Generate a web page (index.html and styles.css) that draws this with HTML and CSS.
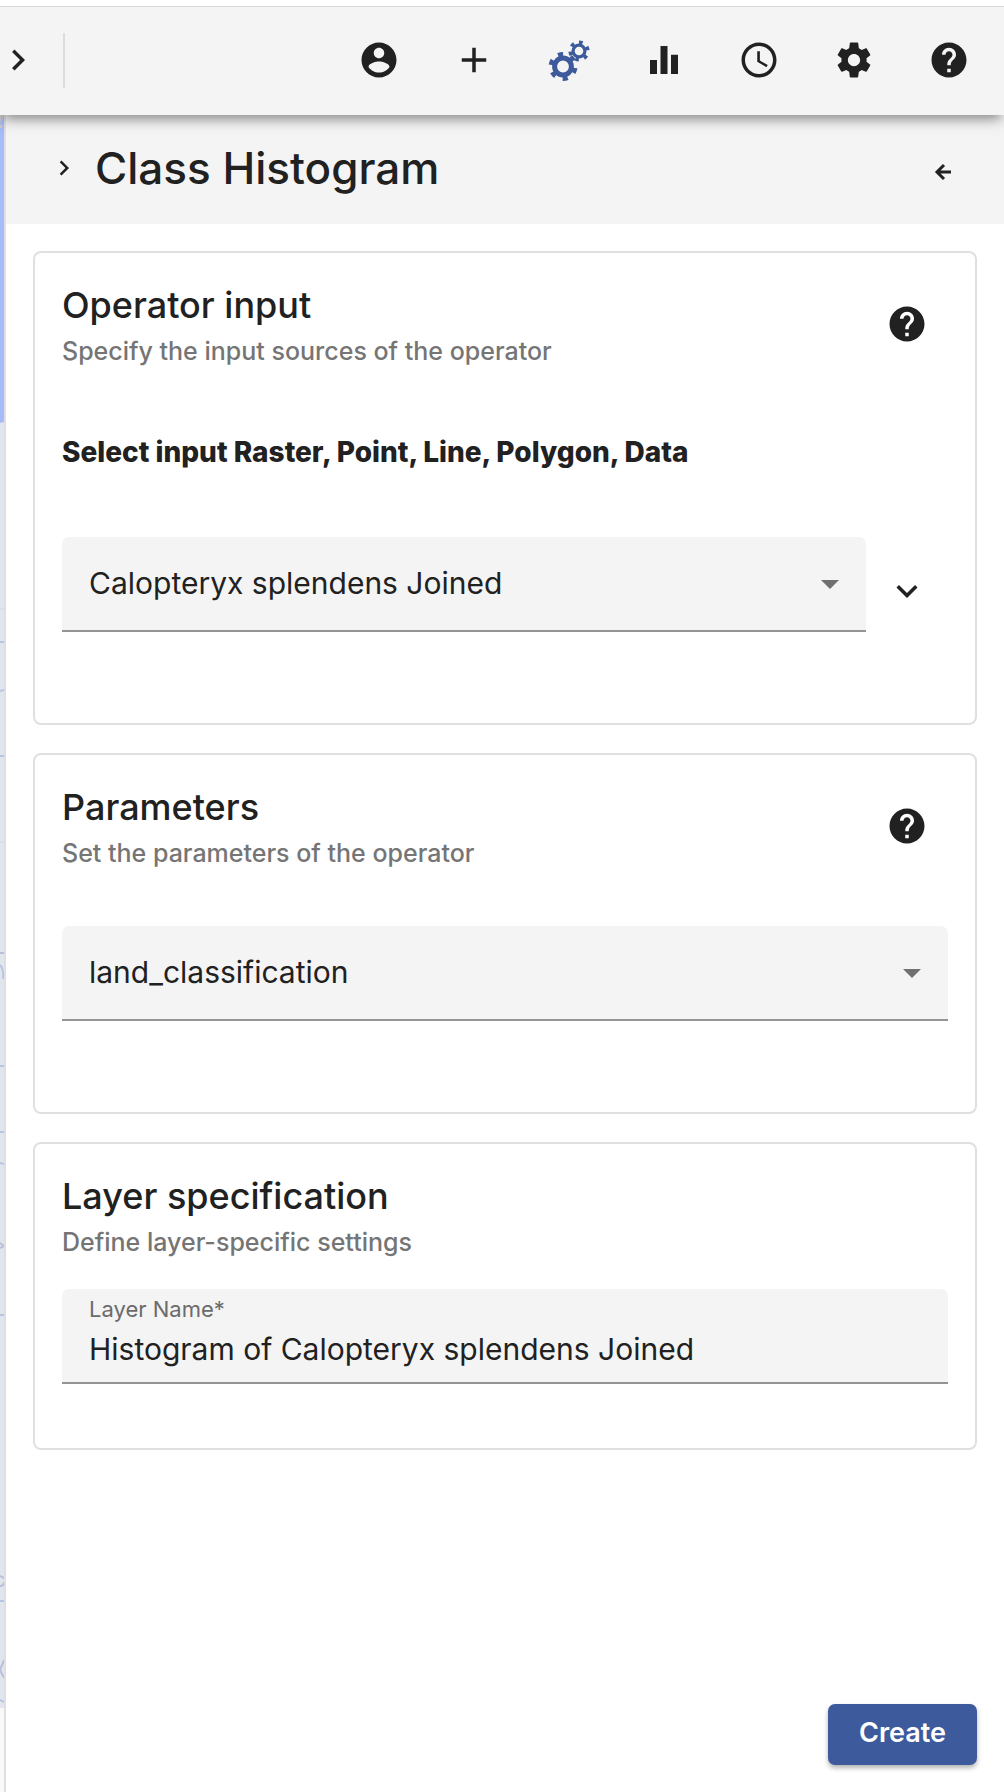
FILE: index.html
```html
<!DOCTYPE html>
<html lang="en">
<head>
<meta charset="utf-8">
<meta name="viewport" content="width=device-width, initial-scale=1">
<title>Class Histogram</title>
<link rel="stylesheet" href="styles.css">
</head>
<body>
<svg class="sprite" aria-hidden="true">
  <symbol id="i-help" viewBox="0 0 24 24"><path d="M12 2C6.480 2 2 6.480 2 12s4.480 10 10 10 10-4.480 10-10S17.520 2 12 2zm1 17h-2v-2h2v2zm2.070-7.750l-.9.920C13.450 12.900 13 13.500 13 15h-2v-.5c0-1.100.450-2.100 1.170-2.830l1.240-1.260c.370-.360.590-.860.590-1.410 0-1.100-.9-2-2-2s-2 .9-2 2H8c0-2.210 1.790-4 4-4s4 1.790 4 4c0 .880-.360 1.680-.930 2.250z"/></symbol>
  <symbol id="i-right" viewBox="0 0 24 24"><path d="M8.590 16.590L13.170 12 8.590 7.410 10 6l6 6-6 6z"/></symbol>
</svg>

<header class="toolbar">
  <button class="icon-btn collapse" type="button" aria-label="Expand"><svg class="icon"><use href="#i-right"/></svg></button>
  <span class="divider"></span>
  <nav class="tools">
    <button class="icon-btn" type="button" aria-label="Account"><svg class="icon" viewBox="0 0 24 24"><path d="M12 2C6.480 2 2 6.480 2 12s4.480 10 10 10 10-4.480 10-10S17.520 2 12 2zm0 3c1.660 0 3 1.340 3 3s-1.340 3-3 3-3-1.340-3-3 1.340-3 3-3zm0 14.200c-2.500 0-4.710-1.280-6-3.220.030-1.990 4-3.080 6-3.080 1.990 0 5.970 1.090 6 3.080-1.290 1.940-3.500 3.220-6 3.220z"/></svg></button>
    <button class="icon-btn" type="button" aria-label="Add data"><svg class="icon" viewBox="0 0 24 24"><path d="M19 13h-6v6h-2v-6H5v-2h6V5h2v6h6v2z"/></svg></button>
    <button class="icon-btn active" type="button" aria-label="Operators"><svg class="icon gears" viewBox="0 0 42 42">
      <circle cx="15" cy="27.500" r="8.400" stroke-width="5"/>
      <circle cx="15" cy="27.500" r="12" stroke-width="5" stroke-dasharray="5 7.566" transform="rotate(-113.500 15 27.500)"/>
      <circle cx="31" cy="12" r="5.900" stroke-width="3.200"/>
      <circle cx="31" cy="12" r="8.600" stroke-width="4" stroke-dasharray="3.600 5.406" transform="rotate(-90 31 12)"/>
    </svg></button>
    <button class="icon-btn" type="button" aria-label="Plots"><svg class="icon" viewBox="0 0 24 24"><path d="M4 12h4v8H4zM10 4h4v16h-4zM16 9h4v11h-4z"/></svg></button>
    <button class="icon-btn" type="button" aria-label="Time"><svg class="icon" viewBox="0 0 24 24"><path d="M11.990 2C6.470 2 2 6.480 2 12s4.470 10 9.990 10C17.520 22 22 17.520 22 12S17.520 2 11.990 2zM12 20c-4.420 0-8-3.580-8-8s3.580-8 8-8 8 3.580 8 8-3.580 8-8 8zm.5-13H11v6l5.250 3.150.750-1.230-4.500-2.670z"/></svg></button>
    <button class="icon-btn" type="button" aria-label="Settings"><svg class="icon" viewBox="0 0 24 24"><path d="M19.140 12.940c.040-.3.060-.610.060-.940 0-.320-.020-.640-.070-.940l2.030-1.580c.180-.140.230-.410.120-.610l-1.920-3.320c-.120-.220-.370-.290-.590-.220l-2.390.960c-.5-.380-1.030-.7-1.620-.940l-.360-2.940c-.040-.240-.240-.410-.480-.410h-3.840c-.240 0-.430.170-.470.410l-.360 2.940c-.590.240-1.130.570-1.620.940l-2.390-.960c-.220-.080-.470 0-.590.220L2.740 8.870c-.120.210-.080.470.120.610l2.030 1.580c-.050.3-.090.630-.090.940s.020.640.070.940l-2.030 1.580c-.180.140-.230.410-.120.610l1.920 3.320c.120.220.370.290.590.220l2.390-.960c.5.380 1.030.7 1.620.940l.360 2.940c.050.240.240.410.480.410h3.840c.240 0 .440-.170.470-.410l.360-2.940c.590-.240 1.130-.560 1.620-.940l2.390.960c.220.080.470 0 .590-.220l1.920-3.320c.120-.220.070-.470-.120-.610l-2.010-1.580zM12 15.500c-1.930 0-3.500-1.570-3.500-3.500s1.570-3.500 3.500-3.500 3.500 1.570 3.500 3.500-1.570 3.500-3.500 3.500z"/></svg></button>
    <button class="icon-btn" type="button" aria-label="Help"><svg class="icon"><use href="#i-help"/></svg></button>
  </nav>
</header>

<div class="workspace">
  <div class="map">
    <svg class="map-art" viewBox="0 0 4 1677" preserveAspectRatio="none" aria-hidden="true">
      <path fill="#e1e6ee" d="M0 0h4v1677H0z"/>
      <path fill="#a5bbfa" d="M0 0h4v307l-4 1z"/>
      <path fill="#c9c9c9" d="M0 0h4v1L0 8zM4 12L0 13V9z"/>
      <path fill="#f9f9f9" d="M0 1593h4v84H0z"/>
      <g fill="none" stroke="#b5c6e2">
        <path d="M0 494h4M0 727h4" stroke="#d1d6e2"/>
        <path stroke-width="2" d="M0 527h4M0 576l4-1M0 641h4M0 951h4M0 1017h4M0 1048l4 1M0 1200h4M0 1486h4M0 1585l4 2M0 850q4 4 3 14"/>
        <path stroke="#b9bfdb" stroke-width="2" d="M0 838h4M0 1128l4 3-4 2M0 1461l4 2M0 1471q4 0 4-4M4 1545l-4 10 4 8"/>
      </g>
    </svg>
  </div>

  <main class="panel">
    <div class="panel-head">
      <button class="icon-btn small" type="button" aria-label="Toggle description"><svg class="icon"><use href="#i-right"/></svg></button>
      <h1>Class Histogram</h1>
      <button class="icon-btn small back" type="button" aria-label="Back"><svg class="icon" viewBox="0 0 30 30"><path d="M22 15H9M15 8l-7 7 7 7"/></svg></button>
    </div>

    <form class="panel-body">
      <section class="card">
        <div class="card-head">
          <div>
            <h2>Operator input</h2>
            <p class="subtitle">Specify the input sources of the operator</p>
          </div>
          <button class="icon-btn" type="button" aria-label="Input help"><svg class="icon"><use href="#i-help"/></svg></button>
        </div>
        <label class="prompt" for="source">Select input Raster, Point, Line, Polygon, Data</label>
        <div class="row">
          <div class="field">
            <select id="source"><option>Calopteryx splendens Joined</option></select>
            <span class="caret"></span>
          </div>
          <button class="icon-btn down" type="button" aria-label="Show details"><svg class="icon"><use href="#i-right"/></svg></button>
        </div>
      </section>

      <section class="card">
        <div class="card-head">
          <div>
            <h2>Parameters</h2>
            <p class="subtitle">Set the parameters of the operator</p>
          </div>
          <button class="icon-btn" type="button" aria-label="Parameter help"><svg class="icon"><use href="#i-help"/></svg></button>
        </div>
        <div class="field parameter">
          <select aria-label="Attribute"><option>land_classification</option></select>
          <span class="caret"></span>
        </div>
      </section>

      <section class="card">
        <div class="card-head">
          <div>
            <h2>Layer specification</h2>
            <p class="subtitle">Define layer-specific settings</p>
          </div>
        </div>
        <div class="field labelled">
          <label for="layer-name">Layer Name*</label>
          <input id="layer-name" type="text" value="Histogram of Calopteryx splendens Joined">
        </div>
      </section>

      <div class="actions"><button class="create" type="submit">Create</button></div>
    </form>
  </main>
</div>
</body>
</html>
```
FILE: styles.css
```css
*, *::before, *::after { box-sizing: border-box; }

body {
  margin: 0;
  min-height: 100vh;
  padding-top: 6px;
  display: flex;
  flex-direction: column;
  background: #fff;
  color: #212121;
  font-family: Inter, "Open Sans", sans-serif;
  font-size: 28px;
}

h1, h2, p { margin: 0; font-weight: 500; }

.sprite { display: none; }

.icon { display: block; width: 42px; height: 42px; fill: currentColor; }

.icon-btn {
  flex: none;
  padding: 0;
  border: 0;
  background: none;
  color: inherit;
}

.icon-btn.active { color: #3c5a9c; }
.icon-btn.down .icon { transform: rotate(90deg); }
.small .icon { width: 30px; height: 30px; }
.back .icon { fill: none; stroke: currentColor; stroke-width: 3; }
.icon.gears { fill: none; stroke: currentColor; }

.toolbar {
  position: relative;
  z-index: 1;
  display: flex;
  align-items: center;
  height: 109px;
  padding: 0 34px 2px 0;
  border-top: 1px solid #d8d8d8;
  background: #f4f4f4;
  box-shadow: 0 9px 9px -5px rgba(0, 0, 0, .26), 0 4px 16px 0 rgba(0, 0, 0, .22);
  clip-path: inset(0 0 -40px 0);
}

.collapse { margin-left: -3px; }

.divider {
  width: 2px;
  height: 55px;
  margin-left: 24px;
  background: #dcdcdc;
}

.tools { display: flex; gap: 53px; margin-left: auto; }

.workspace { flex: 1; display: flex; }

.map { flex: none; display: flex; width: 4px; }
.map-art { width: 4px; }

.panel {
  flex: 1;
  min-width: 0;
  display: flex;
  flex-direction: column;
  border-left: 2px solid #e0dfdf;
}

.panel-head {
  display: flex;
  align-items: center;
  height: 109px;
  padding: 0 45px 4px 43px;
  background: #f4f4f4;
}

.panel-head h1 { margin-left: 16px; font-size: 44px; line-height: 56px; }
.back { margin: 8px 0 0 auto; }

.panel-body {
  flex: 1;
  display: flex;
  flex-direction: column;
  gap: 28px;
  padding: 27px;
}

.card {
  padding: 27px;
  border: 2px solid #e0e0e0;
  border-radius: 8px;
}

.card-head {
  display: flex;
  align-items: center;
  justify-content: space-between;
  padding-right: 20px;
}

.card-head .icon-btn { padding-bottom: 4px; }

.card-head h2 { font-size: 36px; line-height: 50px; }
.subtitle { color: #757575; font-size: 25px; line-height: 42px; }

.prompt {
  display: block;
  margin: 60px 0 65px;
  font-weight: 800;
  font-size: 28px;
  line-height: 40px;
}

.row { display: flex; align-items: center; gap: 20px; margin-bottom: 64px; padding-right: 20px; }
.row .icon-btn { padding-top: 12px; }

.field {
  position: relative;
  flex: 1;
  height: 95px;
  border-bottom: 2px solid #949494;
  border-radius: 7px 7px 0 0;
  background: #f4f4f4;
}

.parameter { margin: 52px 0 64px; }
.labelled { margin: 26px 0 37px; }

.field select,
.field input {
  width: 100%;
  height: 100%;
  padding: 0 27px 2px;
  border: 0;
  border-radius: 0;
  outline: 0;
  background: none;
  color: inherit;
  font: inherit;
  font-size: 30px;
  appearance: none;
}

.field input { padding-top: 28px; }

.field label {
  position: absolute;
  top: 6px;
  left: 27px;
  color: #6b6b6b;
  font-size: 22px;
  line-height: 28px;
}

.caret {
  position: absolute;
  top: 43px;
  right: 27px;
  border: 9px solid transparent;
  border-top-color: #707070;
  border-bottom: 0;
  pointer-events: none;
}

.actions { display: flex; justify-content: flex-end; margin-top: auto; }

.create {
  height: 61px;
  min-width: 149px;
  padding: 0 26px 4px;
  border: 0;
  border-radius: 7px;
  background: #3c5a9c;
  color: #fff;
  font: 600 27px/40px Inter, "Open Sans", sans-serif;
  box-shadow: 0 3px 5px rgba(0, 0, 0, .3);
}
```
